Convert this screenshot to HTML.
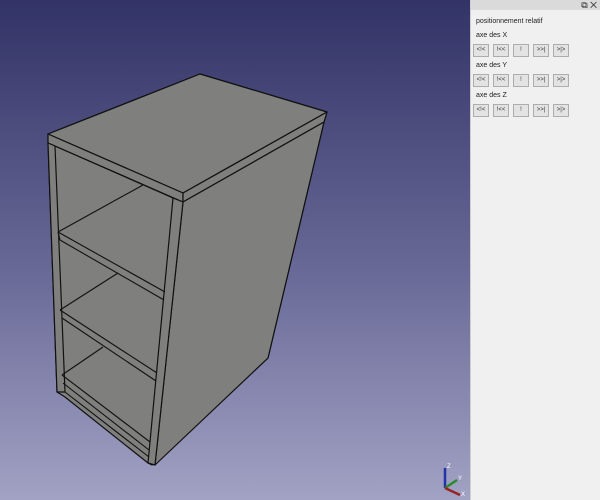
<!DOCTYPE html>
<html><head><style>
body{margin:0;width:600px;height:500px;overflow:hidden;font-family:"Liberation Sans",sans-serif;position:relative}
#vp{position:absolute;left:0;top:0;width:470px;height:500px;background:linear-gradient(#323366,#6a6a98 55%,#a2a2c4)}
#pn{position:absolute;left:470px;top:0;width:130px;height:500px;background:#f0f0f0;border-left:1px solid #cfcfcf}
#hd{height:10px;background:#dadada;font-size:9px;text-align:right;padding-right:4px;line-height:10px;color:#222}
.t{font-size:7px;color:#222;margin:7px 0 0 5px}
.r{display:flex;gap:4px;margin:5px 0 0 2px}
.b{width:14px;height:11px;border:1px solid #adadad;background:#e3e3e3;font-size:6px;line-height:11px;text-align:center;color:#333}
</style></head><body>
<div id="vp">
<svg width="470" height="500" style="position:absolute;left:0;top:0">
<g fill="#7f7f7e" stroke="#111" stroke-width="1.2" stroke-linejoin="round">
<polygon points="48,134 200,74 327,112 324,122 268,358 152,465 148,463 65,397 57,392 48,143"/>
<polygon points="48,134 200,74 327,112 183,193"/>
<polygon points="48,134 183,193 183,202 48,143"/>
<polygon points="183,193 327,112 324,122 183,202"/>
<polygon points="183,202 324,122 268,358 155,465"/>
<polygon points="173,198 183,202 155,465 148,463"/>
<polygon points="48,143 55,146 65,392 57,392"/>
</g>
<g fill="none" stroke="#111" stroke-width="1.1">
<path d="M55,146 L173,198"/>
<path d="M58,232 L143,185 M58,232 L165,292 M60,240 L164,300 M58,232 L60,240"/>
<path d="M60,310 L118,273 M60,310 L157,373 M62,318 L156,381"/>
<path d="M62,375 L103,347 M62,375 L150,442 M63,383 L149,450 M65,392 L149,457"/>
</g>
</svg>
<svg width="40" height="40" style="position:absolute;left:430px;top:460px">
<path d="M15,28 V8" stroke="#2233aa" stroke-width="2.5"/>
<path d="M15,28 L27,20" stroke="#2a8a2a" stroke-width="2.5"/>
<path d="M15,28 L30,35" stroke="#992222" stroke-width="2.5"/>
<text x="17" y="8" font-size="6" fill="#fff">Z</text>
<text x="28" y="20" font-size="6" fill="#fff">Y</text>
<text x="31" y="36" font-size="6" fill="#fff">X</text>
</svg>
</div>
<div id="pn">
<div id="hd">⧉ ✕</div>
<div class="t" style="margin-top:8px">positionnement relatif</div>
<div class="t">axe des X</div>
<div class="r"><div class="b">&lt;!&lt;</div><div class="b">!&lt;&lt;</div><div class="b">!</div><div class="b">&gt;&gt;|</div><div class="b">&gt;|&gt;</div></div>
<div class="t" style="margin-top:5px">axe des Y</div>
<div class="r"><div class="b">&lt;!&lt;</div><div class="b">!&lt;&lt;</div><div class="b">!</div><div class="b">&gt;&gt;|</div><div class="b">&gt;|&gt;</div></div>
<div class="t" style="margin-top:5px">axe des Z</div>
<div class="r"><div class="b">&lt;!&lt;</div><div class="b">!&lt;&lt;</div><div class="b">!</div><div class="b">&gt;&gt;|</div><div class="b">&gt;|&gt;</div></div>
</div>
</body></html>
